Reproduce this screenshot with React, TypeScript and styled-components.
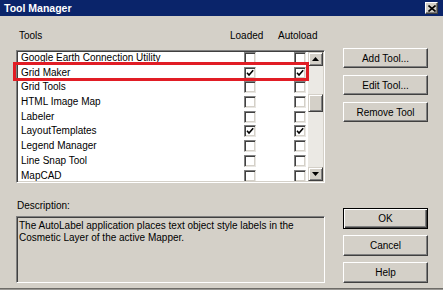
import React from 'react'
import styled, { createGlobalStyle } from 'styled-components'

const Global = createGlobalStyle`
  html, body { margin: 0; padding: 0; background: #d4d0c8; }
  body { font-family: "Liberation Sans", Arial, sans-serif; font-size: 10px; color: #000; }
`

const tools = [
  { name: 'Google Earth Connection Utility', loaded: false, auto: false },
  { name: 'Grid Maker', loaded: true, auto: true },
  { name: 'Grid Tools', loaded: false, auto: false },
  { name: 'HTML Image Map', loaded: false, auto: false },
  { name: 'Labeler', loaded: false, auto: false },
  { name: 'LayoutTemplates', loaded: true, auto: true },
  { name: 'Legend Manager', loaded: false, auto: false },
  { name: 'Line Snap Tool', loaded: false, auto: false },
  { name: 'MapCAD', loaded: false, auto: false },
]

const ToolManager = () => {
  return (
    <Window>
      <Global />
      <TitleBar>
        <Title>Tool Manager</Title>
        <CloseBox>
          <svg width="8" height="7" viewBox="0 0 8 7">
            <path d="M0.5 0.5 L7.5 6.5 M7.5 0.5 L0.5 6.5" stroke="#000" strokeWidth="1.6" />
          </svg>
        </CloseBox>
      </TitleBar>

      <Body>
        <Section>
          <div>
            <Header>
              <span>Tools</span>
              <span>Loaded</span>
              <span>Autoload</span>
            </Header>
            <ListFrame>
              <ListBox>
                <Rows>
                  {tools.map((t) => (
                    <Row key={t.name}>
                      <RowText>{t.name}</RowText>
                      <Check checked={t.loaded} />
                      <span />
                      <Check checked={t.auto} />
                    </Row>
                  ))}
                </Rows>
                <ScrollBar>
                  <ArrowButton>
                    <svg width="7" height="4" viewBox="0 0 7 4"><path d="M3.5 0 L7 4 L0 4 Z" fill="#000" /></svg>
                  </ArrowButton>
                  <Track>
                    <Thumb />
                  </Track>
                  <ArrowButton>
                    <svg width="7" height="4" viewBox="0 0 7 4"><path d="M0 0 L7 0 L3.5 4 Z" fill="#000" /></svg>
                  </ArrowButton>
                </ScrollBar>
              </ListBox>
              <Highlight />
            </ListFrame>
          </div>
          <ButtonColumn top="18px" gap="7px">
            <Button h="20px">Add Tool...</Button>
            <Button h="20px">Edit Tool...</Button>
            <Button h="20px">Remove Tool</Button>
          </ButtonColumn>
        </Section>

        <Section>
          <div>
            <Label>Description:</Label>
            <DescBox>
              The AutoLabel application places text object style labels in the Cosmetic Layer of the active Mapper.
            </DescBox>
          </div>
          <ButtonColumn top="8px" gap="6px">
            <Button h="21px" isDefault>OK</Button>
            <Button h="21px">Cancel</Button>
            <Button h="21px">Help</Button>
          </ButtonColumn>
        </Section>
      </Body>
    </Window>
  )
}

const Check = ({ checked }: { checked: boolean }) => (
  <CheckBox>
    {checked && (
      <svg width="8" height="8" viewBox="0 0 8 8">
        <path d="M1 3.8 L3 6 L7.2 1.2" stroke="#000" strokeWidth="1.6" fill="none" />
      </svg>
    )}
  </CheckBox>
)

export default ToolManager

const Window = styled.div`
  width: 443px;
  height: 290px;
  box-sizing: border-box;
  background: #d4d0c8;
  border-bottom: 1px solid #9a9894;
  box-shadow: inset 0 -1px 0 #6e6c68;
  display: flex;
  flex-direction: column;
  overflow: hidden;
`

const TitleBar = styled.div`
  height: 16px;
  background: #0a246a;
  display: flex;
  align-items: center;
  justify-content: space-between;
  padding: 0 5px 0 4px;
`

const Title = styled.span`
  color: #fff;
  font-weight: bold;
  font-size: 10.5px;
  line-height: 16px;
`

const CloseBox = styled.div`
  width: 13px;
  height: 12px;
  box-sizing: border-box;
  background: #d4d0c8;
  border: 1px solid;
  border-color: #fff #404040 #404040 #fff;
  box-shadow: inset -1px -1px 0 #808080;
  display: flex;
  align-items: center;
  justify-content: center;
`

const Body = styled.div`
  flex: 1;
  padding: 14px 0 0 16px;
  display: flex;
  flex-direction: column;
  gap: 17px;
`

const Section = styled.div`
  display: grid;
  grid-template-columns: 309px 85px;
  column-gap: 18px;
  align-items: start;
`

const Header = styled.div`
  height: 20px;
  display: grid;
  grid-template-columns: 211px 48px auto;
  padding-left: 3px;
  line-height: 12px;
`

const ListFrame = styled.div`
  position: relative;
`

const ListBox = styled.div`
  height: 133px;
  box-sizing: border-box;
  background: #fff;
  border: 1px solid;
  border-color: #808080 #fff #fff #808080;
  box-shadow: inset 1px 1px 0 #404040, inset -1px -1px 0 #d4d0c8;
  padding: 1px;
  display: flex;
  overflow: hidden;
`

const Rows = styled.div`
  flex: 1;
  overflow: hidden;
`

const Row = styled.div`
  height: 14.7px;
  display: grid;
  grid-template-columns: 223px 12px 38px 12px;
  padding-left: 3px;
  align-items: start;
`

const RowText = styled.span`
  line-height: 11px;
  white-space: nowrap;
`

const CheckBox = styled.span`
  width: 12px;
  height: 12px;
  box-sizing: border-box;
  background: #fff;
  border: 1px solid;
  border-color: #808080 #e8e6e2 #e8e6e2 #808080;
  box-shadow: inset 1px 1px 0 #404040, inset -1px -1px 0 #d4d0c8;
  display: flex;
  align-items: center;
  justify-content: center;
`

const ScrollBar = styled.div`
  width: 15px;
  display: flex;
  flex-direction: column;
`

const ArrowButton = styled.div`
  height: 14px;
  box-sizing: border-box;
  background: #d4d0c8;
  border: 1px solid;
  border-color: #d4d0c8 #404040 #404040 #d4d0c8;
  box-shadow: inset 1px 1px 0 #fff, inset -1px -1px 0 #808080;
  display: flex;
  align-items: center;
  justify-content: center;
`

const Track = styled.div`
  flex: 1;
  background: #ebe9e4;
  padding-top: 28px;
`

const Thumb = styled.div`
  height: 18px;
  box-sizing: border-box;
  background: #d4d0c8;
  border: 1px solid;
  border-color: #d4d0c8 #404040 #404040 #d4d0c8;
  box-shadow: inset 1px 1px 0 #fff, inset -1px -1px 0 #808080;
`

const Highlight = styled.div`
  position: absolute;
  left: -3px;
  top: 12px;
  width: 296px;
  height: 19px;
  box-sizing: border-box;
  border: 3px solid #e11d25;
  pointer-events: none;
`

const Label = styled.div`
  line-height: 12px;
  margin-bottom: 4px;
  padding-left: 1px;
`

const DescBox = styled.div`
  height: 67px;
  box-sizing: border-box;
  border: 1px solid;
  border-color: #808080 #fff #fff #808080;
  box-shadow: inset 1px 1px 0 #404040, inset -1px -1px 0 #d4d0c8;
  padding: 3px 6px 0 2px;
  line-height: 12px;
`

const ButtonColumn = styled.div<{ top: string; gap: string }>`
  padding-top: ${(p) => p.top};
  display: flex;
  flex-direction: column;
  gap: ${(p) => p.gap};
`

const Button = styled.div<{ h: string; isDefault?: boolean }>`
  height: ${(p) => p.h};
  box-sizing: border-box;
  background: #d4d0c8;
  border: 1px solid;
  border-color: ${(p) => (p.isDefault ? '#000' : '#fff #404040 #404040 #fff')};
  box-shadow: ${(p) =>
    p.isDefault
      ? 'inset 1px 1px 0 #fff, inset -1px -1px 0 #404040, inset -2px -2px 0 #808080'
      : 'inset -1px -1px 0 #808080'};
  display: flex;
  align-items: center;
  justify-content: center;
  font-size: 10px;
`
